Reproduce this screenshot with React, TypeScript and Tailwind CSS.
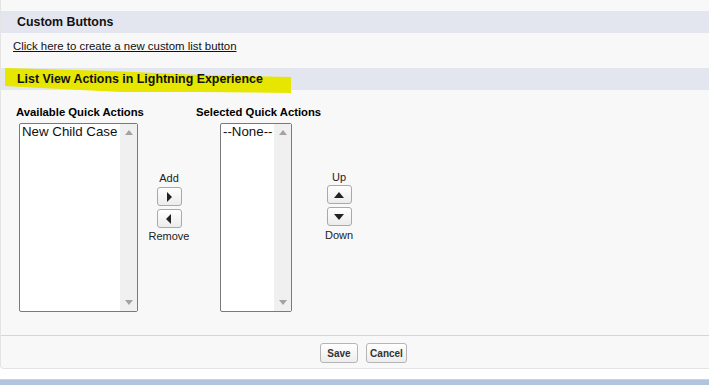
import React from "react";

function ArrowBtn({ dir }: { dir: "right" | "left" | "up" | "down" }) {
  const pts: Record<string, string> = {
    right: "3,0 8,5 3,10",
    left: "7,0 2,5 7,10",
    up: "1,8 6,2 11,8",
    down: "1,2 6,8 11,2",
  };
  const horiz = dir === "right" || dir === "left";
  return (
    <div className="w-[25px] h-[19px] rounded-[3px] border border-[#a9a9a9] bg-gradient-to-b from-white to-[#ececec] flex items-center justify-center">
      <svg width={horiz ? 10 : 12} height="10" viewBox={horiz ? "0 0 10 10" : "0 0 12 10"}>
        <polygon points={pts[dir]} fill="#222" />
      </svg>
    </div>
  );
}

function ListBox({ width, item }: { width: number; item: string }) {
  return (
    <div
      className="h-[189px] border border-[#7a7a7a] rounded-[2px] bg-white flex"
      style={{ width }}
    >
      <div className="flex-1 pl-[2px] text-[13.3px] leading-[15px] text-[#111]">{item}</div>
      <div className="w-[17px] bg-[#f0f0f0] flex flex-col items-center justify-between py-[6px]">
        <svg width="8" height="5" viewBox="0 0 8 5"><polygon points="0,5 4,0 8,5" fill="#a3a3a3" /></svg>
        <svg width="8" height="5" viewBox="0 0 8 5"><polygon points="0,0 4,5 8,0" fill="#a3a3a3" /></svg>
      </div>
    </div>
  );
}

export default function App() {
  return (
    <div className="w-[709px] h-[385px] overflow-hidden bg-white font-['Liberation_Sans',Arial,sans-serif] text-black">
      <div className="w-[760px] bg-[#f8f8f8] border-l border-b border-[#e4e4e4] rounded-bl-[4px]">
        <div className="h-[11px]" />
        <div className="h-[22px] bg-[#e3e6ef] pl-[16px] flex items-center text-[12.4px] font-bold text-[#111]">
          Custom Buttons
        </div>
        <div className="h-[35px] pl-[12px] pt-[7px] text-[11.4px] leading-[13px]">
          <span className="underline text-[#111]">Click here to create a new custom list button</span>
        </div>
        <div className="relative h-[22px] bg-[#e3e6ef] flex items-center pl-[16px]">
          <svg className="absolute left-0 top-[-1px]" width="300" height="27" viewBox="0 0 300 27">
            <polygon points="4,1 110,4 200,8 290,10 290,26 200,25 120,25 40,21 4,19" fill="#e6e600" />
          </svg>
          <span className="relative text-[12.4px] font-bold text-[#111]">List View Actions in Lightning Experience</span>
        </div>
        <div className="h-[245px] pt-[16px] flex items-start">
          <div className="ml-[15px] w-[128px]">
            <div className="text-[11.3px] font-bold leading-[13px] whitespace-nowrap">Available Quick Actions</div>
            <div className="mt-[4px] ml-[3px]">
              <ListBox width={119} item="New Child Case" />
            </div>
          </div>
          <div className="w-[50px] mt-[66px] flex flex-col items-center text-[11px] leading-[13px] text-[#222]">
            <div>Add</div>
            <div className="mt-[2px]"><ArrowBtn dir="right" /></div>
            <div className="mt-[3px]"><ArrowBtn dir="left" /></div>
            <div className="mt-[2px]">Remove</div>
          </div>
          <div className="ml-[2px] w-[124px]">
            <div className="text-[11.3px] font-bold leading-[13px] whitespace-nowrap">Selected Quick Actions</div>
            <div className="mt-[4px] ml-[24px]">
              <ListBox width={72} item="--None--" />
            </div>
          </div>
          <div className="w-[38px] mt-[65px] flex flex-col items-center text-[11px] leading-[13px] text-[#222]">
            <div>Up</div>
            <div className="mt-[1px]"><ArrowBtn dir="up" /></div>
            <div className="mt-[3px]"><ArrowBtn dir="down" /></div>
            <div className="mt-[3px]">Down</div>
          </div>
        </div>
        <div className="h-[33px] border-t border-[#d6d6d6] pl-[319px] pt-[7px] flex gap-[8px] items-start">
          <button className="h-[20px] w-[38px] rounded-[3px] border border-[#b5b5b5] bg-gradient-to-b from-white to-[#ededed] text-[10px] font-bold text-[#333]">
            Save
          </button>
          <button className="h-[20px] w-[41px] rounded-[3px] border border-[#b5b5b5] bg-gradient-to-b from-white to-[#ededed] text-[10px] font-bold text-[#333]">
            Cancel
          </button>
        </div>
      </div>
      <div className="h-[10px]" />
      <div className="h-[10px] bg-[#b0c4df] border-t border-[#c8d4e6]" />
    </div>
  );
}
